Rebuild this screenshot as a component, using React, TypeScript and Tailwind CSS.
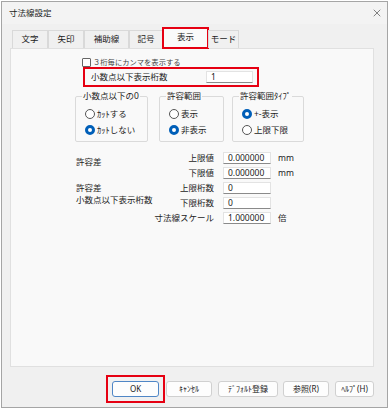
import { X } from 'lucide-react';

const tabs = [
    { label: '文字', w: 'w-[36px]' },
    { label: '矢印', w: 'w-[36px]' },
    { label: '補助線', w: 'w-[45px]' },
    { label: '記号', w: 'w-[34px]' },
];

function Radio({ label, checked }: { label: string; checked?: boolean }) {
    return (
        <div className="flex h-[10px] items-center gap-[2px]">
            {checked ? (
                <span className="h-[10px] w-[10px] shrink-0 rounded-full border-[3px] border-[#005fb8] bg-white" />
            ) : (
                <span className="h-[10px] w-[10px] shrink-0 rounded-full border border-[#555] bg-white" />
            )}
            <span className="leading-none">{label}</span>
        </div>
    );
}

function Group({ title, w, items }: { title: string; w: string; items: { label: string; checked?: boolean }[] }) {
    return (
        <fieldset className={`${w} h-[51px] shrink-0 rounded-[2px] border border-[#dadada]`}>
            <legend className="ml-[6px] whitespace-nowrap px-[1px] text-[8.5px] leading-[10px]">{title}</legend>
            <div className="mt-[8px] flex flex-col gap-[6px] pl-[9px]">
                {items.map((it) => (
                    <Radio key={it.label} label={it.label} checked={it.checked} />
                ))}
            </div>
        </fieldset>
    );
}

function TextBox({ value, w = 'w-[48px]' }: { value: string; w?: string }) {
    return (
        <div className={`${w} flex h-[12px] items-center border border-[#e3e3e3] border-b-[#8a8a8a] bg-white pl-[4px] text-[8.5px] leading-none`}>
            {value}
        </div>
    );
}

const rows = [
    { label: '上限値', value: '0.000000', unit: 'mm' },
    { label: '下限値', value: '0.000000', unit: 'mm' },
    { label: '上限桁数', value: '0', unit: '' },
    { label: '下限桁数', value: '0', unit: '' },
    { label: '寸法線スケール', value: '1.000000', unit: '倍' },
];

export default function App() {
    return (
        <div className="h-[410px] w-[389px] bg-white pl-[1px] pt-[1px] font-['Noto_Sans','Noto_Sans_CJK_JP',sans-serif] text-[#1b1b1b]">
            <div className="flex h-[407px] w-[387px] flex-col border border-[#a5a5a5] bg-[#f0f0f0]">
                {/* タイトルバー */}
                <div className="flex h-[22px] items-center justify-between bg-[#f3f3f3] pl-[7px] pr-[4px]">
                    <span className="text-[8.5px] leading-none">寸法線設定</span>
                    <X size={12} strokeWidth={1.2} className="text-[#333]" />
                </div>

                {/* タブ */}
                <div className="relative z-10 mt-[3px] -mb-px ml-[10px] flex h-[22px] items-end">
                    {tabs.map((t) => (
                        <div
                            key={t.label}
                            className={`${t.w} mb-px flex h-[18px] items-center justify-center border border-b-0 border-[#d9d9d9] bg-[#f0f0f0] text-[8.5px] leading-none`}
                        >
                            {t.label}
                        </div>
                    ))}
                    <div className="-ml-px flex h-[22px] w-[47px] items-center justify-center border-2 border-[#e60012] bg-[#fafafa] pb-[2px] text-[8.5px] leading-none">
                        表示
                    </div>
                    <div className="-ml-px mb-px flex h-[18px] w-[31px] items-center justify-center border border-b-0 border-[#d9d9d9] bg-[#f0f0f0] text-[8.5px] leading-none">
                        モード
                    </div>
                </div>

                {/* パネル */}
                <div className="ml-[8px] mr-[13px] h-[319px] border border-[#e0e0e0] bg-[#f9f9f9] text-[8.5px]">
                    <div className="ml-[71px] mt-[9px] flex h-[9px] items-center gap-[2px]">
                        <span className="h-[9px] w-[9px] rounded-[1px] border border-[#666] bg-white" />
                        <span className="text-[7.3px] leading-none text-[#444]">３桁毎にカンマを表示する</span>
                    </div>

                    <div className="ml-[72px] flex h-[20px] w-[176px] items-center justify-between border-2 border-[#e60012] pl-[6px] pr-[4px]">
                        <span className="leading-none">小数点以下表示桁数</span>
                        <TextBox value="1" w="w-[47px]" />
                    </div>

                    <div className="ml-[64px] mt-[4px] flex">
                        <Group
                            title="小数点以下の0"
                            w="w-[73px]"
                            items={[{ label: 'ｶｯﾄする' }, { label: 'ｶｯﾄしない', checked: true }]}
                        />
                        <div className="ml-[11px]">
                            <Group title="許容範囲" w="w-[65px]" items={[{ label: '表示' }, { label: '非表示', checked: true }]} />
                        </div>
                        <div className="ml-[8px]">
                            <Group
                                title="許容範囲ﾀｲﾌﾟ"
                                w="w-[72px]"
                                items={[{ label: '+-表示', checked: true }, { label: '上限下限' }]}
                            />
                        </div>
                    </div>

                    <div className="ml-[65px] mt-[10px] grid grid-cols-[84px_54px_57px_auto] grid-rows-[12px_12px_12px_12px_12px] gap-y-[3px]">
                        <div className="col-start-1 row-span-2 row-start-1 mt-[5px] self-start leading-[10px]">許容差</div>
                        <div className="col-start-1 row-span-2 row-start-3 self-start leading-[12px]">
                            <div>許容差</div>
                            <div>小数点以下表示桁数</div>
                        </div>
                        {rows.map((r, i) => (
                            <div key={r.label} className="contents">
                                <div
                                    className="col-start-2 flex items-center justify-end whitespace-nowrap leading-none"
                                    style={{ gridRowStart: i + 1 }}
                                >
                                    {r.label}
                                </div>
                                <div className="col-start-3 pl-[9px]" style={{ gridRowStart: i + 1 }}>
                                    <TextBox value={r.value} />
                                </div>
                                <div className="col-start-4 flex items-center pl-[7px] leading-none" style={{ gridRowStart: i + 1 }}>
                                    {r.unit}
                                </div>
                            </div>
                        ))}
                    </div>
                </div>

                {/* ボタン */}
                <div className="mr-[13px] mt-[8px] flex items-center justify-end text-[8px]">
                    <div className="border-2 border-[#e60012] p-[4px]">
                        <button className="flex h-[16px] w-[47px] items-center justify-center rounded-[3px] border border-[#4f86c6] bg-[#fdfdfd] leading-none">
                            OK
                        </button>
                    </div>
                    <button className="ml-[1px] flex h-[16px] w-[46px] items-center justify-center rounded-[3px] border border-[#d0d0d0] bg-[#fdfdfd] leading-none">
                        ｷｬﾝｾﾙ
                    </button>
                    <button className="ml-[6px] flex h-[16px] w-[60px] items-center justify-center rounded-[3px] border border-[#d0d0d0] bg-[#fdfdfd] leading-none">
                        ﾃﾞﾌｫﾙﾄ登録
                    </button>
                    <button className="ml-[5px] flex h-[16px] w-[46px] items-center justify-center rounded-[3px] border border-[#d0d0d0] bg-[#fdfdfd] leading-none">
                        参照(R)
                    </button>
                    <button className="ml-[6px] flex h-[16px] w-[39px] items-center justify-center rounded-[3px] border border-[#d0d0d0] bg-[#fdfdfd] leading-none">
                        ﾍﾙﾌﾟ(H)
                    </button>
                </div>
            </div>
        </div>
    );
}
